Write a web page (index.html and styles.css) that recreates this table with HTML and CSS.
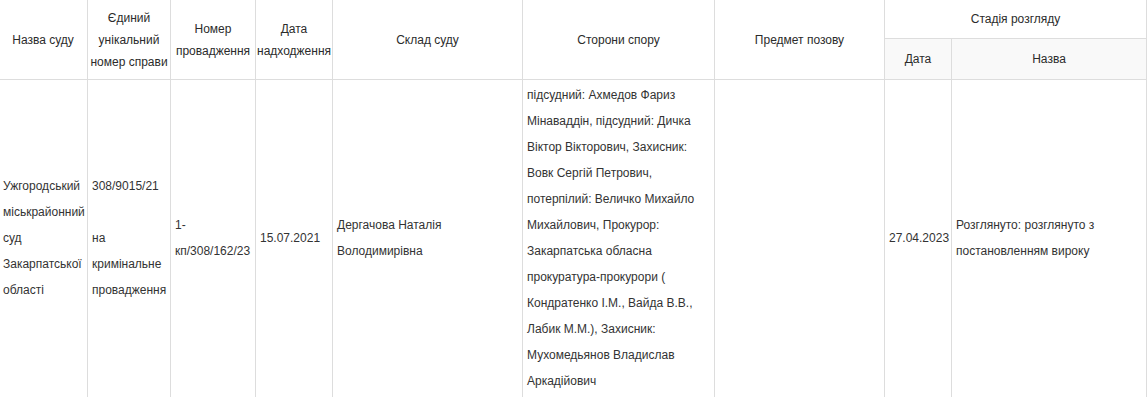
FILE: index.html
```html
<!DOCTYPE html>
<html lang="uk">
<head>
<meta charset="utf-8">
<title>Справи</title>
<link rel="stylesheet" href="styles.css">
</head>
<body>
<table class="cases">
  <colgroup>
    <col class="w-court">
    <col class="w-num">
    <col class="w-proc">
    <col class="w-date">
    <col class="w-judges">
    <col class="w-parties">
    <col class="w-subject">
    <col class="w-sdate">
    <col class="w-sname">
  </colgroup>
  <thead>
    <tr class="head-main">
      <th rowspan="2">Назва суду</th>
      <th rowspan="2">Єдиний унікальний номер справи</th>
      <th rowspan="2">Номер провадження</th>
      <th rowspan="2">Дата надходження</th>
      <th rowspan="2">Склад суду</th>
      <th rowspan="2">Сторони спору</th>
      <th rowspan="2">Предмет позову</th>
      <th colspan="2">Стадія розгляду</th>
    </tr>
    <tr class="head-sub">
      <th>Дата</th>
      <th>Назва</th>
    </tr>
  </thead>
  <tbody>
    <tr>
      <td>Ужгородський міськрайонний суд Закарпатської області</td>
      <td>308/9015/21<br><br>на кримінальне провадження</td>
      <td>1-кп/308/162/23</td>
      <td>15.07.2021</td>
      <td>Дергачова Наталія Володимирівна</td>
      <td>підсудний: Ахмедов Фариз Мінаваддін, підсудний: Дичка Віктор Вікторович, Захисник: Вовк Сергій Петрович, потерпілий: Величко Михайло Михайлович, Прокурор: Закарпатська обласна прокуратура-прокурори ( Кондратенко І.М., Вайда В.В., Лабик М.М.), Захисник: Мухомедьянов Владислав Аркадійович</td>
      <td></td>
      <td>27.04.2023</td>
      <td>Розглянуто: розглянуто з постановленням вироку</td>
    </tr>
  </tbody>
</table>
</body>
</html>
```

FILE: styles.css
```css
html, body {
  margin: 0;
  padding: 0;
  background: #ffffff;
}

body {
  font-family: "Liberation Sans", Arial, sans-serif;
  font-size: 12px;
  color: #333333;
}

.cases {
  border-collapse: collapse;
  table-layout: fixed;
  width: 1149px;
  margin: -1px 0 0 -2px;
}

.w-court { width: 89px; }
.w-num { width: 83px; }
.w-proc { width: 85px; }
.w-date { width: 77px; }
.w-judges { width: 190px; }
.w-parties { width: 192px; }
.w-subject { width: 170px; }
.w-sdate { width: 67px; }
.w-sname { width: 195px; }

.cases th,
.cases td {
  border: 1px solid #dddddd;
}

.cases th {
  font-weight: normal;
  text-align: center;
  vertical-align: middle;
  line-height: 22px;
  padding: 0 1px;
  color: #2b2b2b;
}

.head-main th {
  height: 38px;
}

.head-sub th {
  height: 40px;
  background: #f9f9f9;
}

.cases td {
  text-align: left;
  vertical-align: middle;
  line-height: 26px;
  padding: 2px 4px 3px 4px;
  color: #333333;
}
```
